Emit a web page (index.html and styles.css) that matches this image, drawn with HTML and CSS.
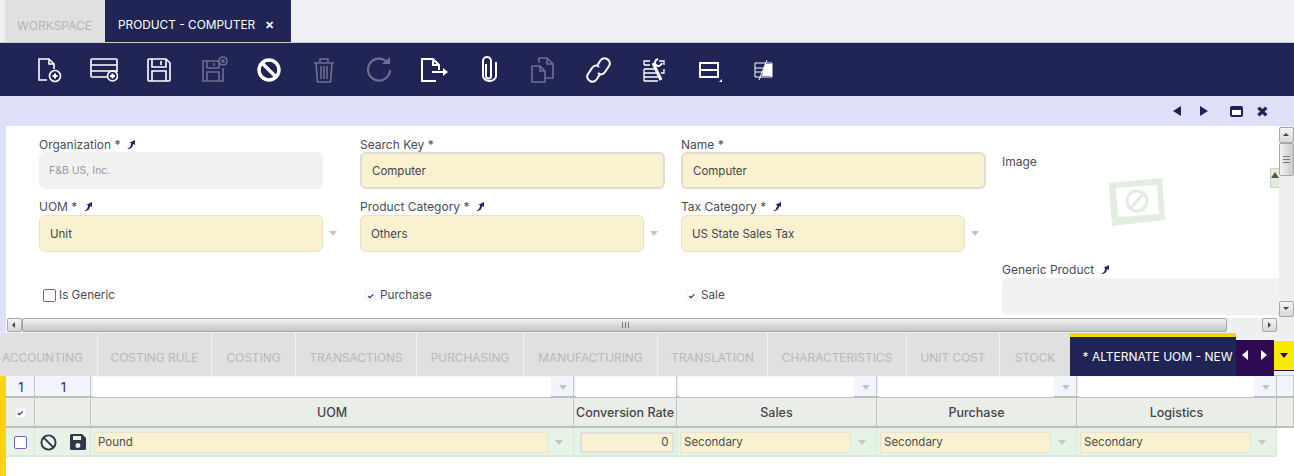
FILE: index.html
```html
<!DOCTYPE html>
<html lang="en">
<head>
  <meta charset="UTF-8">
  <title>Product - Computer</title>
  <link rel="stylesheet" href="styles.css">
</head>
<body>
<div class="wintabs">
  <div class="wintab">WORKSPACE</div>
  <div class="wintab current">PRODUCT - COMPUTER <span class="close">&#10005;</span></div>
</div>

<div class="toolbar">
  <span class="tool"><svg viewBox="0 0 28 28"><path d="M12 24H4V3h10l5 5v5M14 3v5h5"/><circle cx="20" cy="20" r="5.5"/><path d="M17.5 20h5M20 17.5v5" stroke-width="2"/></svg></span>
  <span class="tool"><svg viewBox="0 0 28 28"><path d="M17 21H2a1 1 0 0 1-1-1V4a1 1 0 0 1 1-1h24a1 1 0 0 1 1 1v12M1 9h26M1 15h26"/><circle cx="22.500" cy="20" r="5"/><path d="M20 20h5M22.500 17.500v5" stroke-width="2"/></svg></span>
  <span class="tool"><svg viewBox="0 0 28 28"><path d="M4 3h17l4 4v17a1 1 0 0 1-1 1H4a1 1 0 0 1-1-1V4a1 1 0 0 1 1-1zM7 3v8h14V3M7 25V15h14v10M16 5v4"/></svg></span>
  <span class="tool off"><svg viewBox="0 0 28 28"><path d="M19 5H3v20h20V12M7 5v7h12V5M7 25v-9h12v9M14 7v3"/><circle cx="23" cy="5" r="4"/><path d="M21.500 3.500l3 3M24.500 3.500l-3 3"/></svg></span>
  <span class="tool"><svg viewBox="0 0 28 28"><circle cx="14" cy="14" r="10" stroke-width="3.400"/><path d="M7 7l14 14" stroke-width="3.400"/></svg></span>
  <span class="tool off"><svg viewBox="0 0 28 28"><path d="M4 7h20M10 6V3h8v3M6 7l1.500 19h13L22 7M11 10v13M14 10v13M17 10v13"/></svg></span>
  <span class="tool off"><svg viewBox="0 0 28 28"><path d="M22 6a11 11 0 1 0 3 8" stroke-width="2.200"/><path d="M17 8h8V1z" fill="currentColor" stroke="none"/></svg></span>
  <span class="tool"><svg viewBox="0 0 28 28"><path d="M16 25H2V3h11l6 6v5M13 3v6h6M12 16h13" stroke-width="2"/><path d="M23 12l5 4-5 4z" fill="currentColor" stroke="none"/></svg></span>
  <span class="tool"><svg viewBox="0 0 28 28"><path d="M11 8v12a2.500 2.500 0 0 0 5 0V5a4 4 0 0 0-8 0v15a6.500 5 0 0 0 13 0V6" stroke-width="2"/></svg></span>
  <span class="tool off"><svg viewBox="0 0 28 28"><path d="M9 7V2h8l6 6v14h-8M17 2v6h6M2 10h8l5 5v11H2zM10 10v5h5"/></svg></span>
  <span class="tool"><svg viewBox="0 0 28 28"><path d="M12 10l3-5c2-3 5-3 7-2s4 4 2 7l-4 6c-2 3-5 3-7 1M15 18l-3 5c-2 3-5 3-7 2s-4-4-2-7l4-6c2-3 5-3 7-1" stroke-width="2"/></svg></span>
  <span class="tool"><svg viewBox="0 0 28 28"><path d="M4 9V5h6M4 9h6M4 13h11M4 17h13M4 21h16M4 25h14M4 13v12M19 5h5v4M24 13v4h-3" stroke-width="1.300"/><path d="M13 7l8 17" stroke-width="3"/><path d="M18 3c-3 1-4 4-2 6s5 1 6-2" stroke-width="2"/></svg></span>
  <span class="tool"><svg viewBox="0 0 28 28"><path d="M5 7h18v14H5zM5 14h18" stroke-width="2"/><path d="M24 26h3v-3z" fill="currentColor" stroke="none"/></svg></span>
  <span class="tool"><svg viewBox="0 0 28 28"><path d="M5 7h17v14H5zM5 12h12M5 16h10" stroke-width="1"/><path d="M15 8h7v12H12z" fill="currentColor" stroke="none"/><path d="M17 4L9 24" stroke-width="1"/></svg></span>
</div>

<div class="panehead">
  <span class="tri left"></span>
  <span class="tri right"></span>
  <span class="winbtn"></span>
  <span class="closebtn">&#10006;</span>
</div>

<div class="formwrap">
  <div class="form">
    <div class="col">
      <div class="field">
        <label>Organization * <svg class="zoom" viewBox="0 0 10 10"><path d="M1 9c3-1 4-3 4-6L3 3l6-3 0 5-2-1c0 3-2 5-6 5z"/></svg></label>
        <div class="inp readonly">F&amp;B US, Inc.</div>
      </div>
      <div class="field">
        <label>UOM * <svg class="zoom" viewBox="0 0 10 10"><path d="M1 9c3-1 4-3 4-6L3 3l6-3 0 5-2-1c0 3-2 5-6 5z"/></svg></label>
        <div class="inp select">Unit</div>
      </div>
      <div class="check"><span class="box"></span>Is Generic</div>
    </div>
    <div class="col">
      <div class="field">
        <label>Search Key *</label>
        <div class="inp thick">Computer</div>
      </div>
      <div class="field">
        <label>Product Category * <svg class="zoom" viewBox="0 0 10 10"><path d="M1 9c3-1 4-3 4-6L3 3l6-3 0 5-2-1c0 3-2 5-6 5z"/></svg></label>
        <div class="inp select">Others</div>
      </div>
      <div class="check ticked"><span class="box small">&#10003;</span>Purchase</div>
    </div>
    <div class="col">
      <div class="field">
        <label>Name *</label>
        <div class="inp thick">Computer</div>
      </div>
      <div class="field">
        <label>Tax Category * <svg class="zoom" viewBox="0 0 10 10"><path d="M1 9c3-1 4-3 4-6L3 3l6-3 0 5-2-1c0 3-2 5-6 5z"/></svg></label>
        <div class="inp select">US State Sales Tax</div>
      </div>
      <div class="check ticked"><span class="box small">&#10003;</span>Sale</div>
    </div>
    <div class="col last">
      <label class="imglabel">Image</label>
      <svg class="noimage" viewBox="0 0 58 50"><path d="M1 6L54 1l3 42-53 6z" fill="#e3ece1"/><path d="M8 11L49 8l2 29-41 3z" fill="#fff"/><circle cx="29" cy="24" r="10" fill="none" stroke="#e3ece1" stroke-width="3"/><path d="M23 31l12-14" stroke="#e3ece1" stroke-width="3"/></svg>
      <label class="genlabel">Generic Product <svg class="zoom" viewBox="0 0 10 10"><path d="M1 9c3-1 4-3 4-6L3 3l6-3 0 5-2-1c0 3-2 5-6 5z"/></svg></label>
      <div class="inp readonly wide"></div>
    </div>
    <span class="imgbtn"></span>
  </div>
  <div class="vbar">
    <span class="sbtn up"></span>
    <span class="vthumb"></span>
    <span class="sbtn down"></span>
  </div>
  <div class="hbar">
    <span class="sbtn lft"></span>
    <span class="hthumb"></span>
    <span class="sbtn rgt"></span>
  </div>
</div>

<div class="subtabs">
  <div class="subtab first">ACCOUNTING</div>
  <div class="subtab">COSTING RULE</div>
  <div class="subtab">COSTING</div>
  <div class="subtab">TRANSACTIONS</div>
  <div class="subtab">PURCHASING</div>
  <div class="subtab">MANUFACTURING</div>
  <div class="subtab">TRANSLATION</div>
  <div class="subtab">CHARACTERISTICS</div>
  <div class="subtab">UNIT COST</div>
  <div class="subtab">STOCK</div>
  <div class="subtab active">* ALTERNATE UOM - NEW</div>
  <div class="subnav">
    <span class="tri-w left"></span>
    <span class="tri-w right"></span>
  </div>
  <div class="submenu"><span></span></div>
</div>

<div class="gridwrap">
  <div class="row filter">
    <div class="c num">1</div>
    <div class="c num">1</div>
    <div class="c"><span class="finp"></span><span class="arrow"></span></div>
    <div class="c"><span class="finp"></span></div>
    <div class="c"><span class="finp"></span><span class="arrow"></span></div>
    <div class="c"><span class="finp"></span><span class="arrow"></span></div>
    <div class="c"><span class="finp"></span><span class="arrow"></span></div>
    <div class="c"></div>
  </div>
  <div class="row head">
    <div class="c"><span class="box small">&#10003;</span></div>
    <div class="c"></div>
    <div class="c">UOM</div>
    <div class="c">Conversion Rate</div>
    <div class="c">Sales</div>
    <div class="c">Purchase</div>
    <div class="c">Logistics</div>
    <div class="c"></div>
  </div>
  <div class="row data">
    <div class="c"><span class="box"></span></div>
    <div class="c acts">
      <svg viewBox="0 0 18 18"><circle cx="9" cy="9" r="7.500"/><path d="M3.800 3.800l10.400 10.400"/></svg>
      <svg viewBox="0 0 16 16"><path class="solid" d="M1.500 0H12l4 4v10.500a1.500 1.500 0 0 1-1.500 1.500h-13A1.500 1.500 0 0 1 0 14.500v-13A1.500 1.500 0 0 1 1.500 0zM3 2v4h8V2zM8 9a2.500 2.500 0 1 0 0 5 2.500 2.500 0 0 0 0-5z" fill-rule="evenodd"/></svg>
    </div>
    <div class="c"><span class="dinp">Pound</span><span class="arrow"></span></div>
    <div class="c"><span class="dinp num thick">0</span></div>
    <div class="c"><span class="dinp">Secondary</span><span class="arrow"></span></div>
    <div class="c"><span class="dinp">Secondary</span><span class="arrow"></span></div>
    <div class="c"><span class="dinp">Secondary</span><span class="arrow"></span></div>
  </div>
</div>
</body>
</html>
```

FILE: styles.css
```css
* {
  box-sizing: border-box;
  margin: 0;
  padding: 0;
}

body {
  width: 1294px;
  height: 476px;
  overflow: hidden;
  background: #fff;
  font-family: Inter, "Liberation Sans", sans-serif;
  font-size: 11.700px;
  color: #4a4d55;
}

/* window tabs */
.wintabs {
  display: flex;
  height: 43px;
  padding-left: 5px;
  background: #eff0f6;
  border-bottom: 1px solid #c9cad0;
}

.wintab {
  display: flex;
  align-items: center;
  width: 100px;
  padding: 8px 0 0 12px;
  background: #e0e0e0;
  color: #b5b5b5;
  font-size: 12px;
}

.wintab.current {
  width: 186px;
  padding-left: 13px;
  background: #202556;
  color: #fff;
  font-size: 11.850px;
}

.close {
  margin-left: 10px;
  font-size: 11px;
  font-weight: bold;
}

/* toolbar */
.toolbar {
  display: flex;
  align-items: center;
  height: 53px;
  padding-left: 21px;
  background: #202556;
}

.tool {
  display: flex;
  justify-content: center;
  width: 55px;
  color: #fff;
}

.tool.off {
  color: #6c6f8f;
}

.tool svg {
  width: 28px;
  height: 28px;
  fill: none;
  stroke: currentColor;
  stroke-width: 1.600;
}

/* pane header */
.panehead {
  display: flex;
  align-items: center;
  height: 30px;
  padding-left: 1173px;
  background: #dde0f7;
}

.tri {
  width: 0;
  height: 0;
  border-top: 5px solid transparent;
  border-bottom: 5px solid transparent;
}

.tri.left {
  border-right: 8px solid #1c2159;
}

.tri.right {
  margin-left: 19px;
  border-left: 8px solid #1c2159;
}

.winbtn {
  width: 13px;
  height: 11px;
  margin-left: 22px;
  background: #fff;
  border: 2px solid #1c2159;
  border-top-width: 4px;
  border-radius: 2px;
}

.closebtn {
  margin-left: 13px;
  color: #1c2159;
  font-size: 15px;
  line-height: 15px;
}

/* form */
.formwrap {
  position: relative;
  height: 206px;
  border-left: 6px solid #dde0f7;
}

.form {
  display: grid;
  grid-template-columns: 321px 321px 321px 277px;
  height: 191px;
  padding: 9px 0 0 33px;
  overflow: hidden;
}

.col {
  display: flex;
  flex-direction: column;
}

.field {
  height: 54px;
  margin-bottom: 9px;
}

label {
  display: block;
  height: 17px;
  line-height: 19px;
  font-size: 12px;
  white-space: nowrap;
}

.field + .field label,
.genlabel {
  line-height: 17px;
}

.zoom {
  width: 10px;
  height: 10px;
  margin-left: 2px;
  vertical-align: -1px;
  fill: #3b1a66;
}

.inp {
  position: relative;
  width: 284px;
  height: 37px;
  padding-left: 10px;
  line-height: 36px;
  background: #f9f1cf;
  border: 1px solid #e6e3d0;
  border-radius: 6px;
  font-size: 11.500px;
  color: #43464e;
}

.inp.thick {
  width: 305px;
  border: 2px solid #dfddd0;
  line-height: 34px;
}

.inp.readonly {
  padding-left: 9px;
  background: #f1f1f1;
  border-color: #f1f1f1;
  color: #9a9a9a;
  font-size: 10.500px;
}

.inp.wide {
  width: 277px;
  border-radius: 6px 0 0 6px;
}

.inp.select::after {
  content: "";
  position: absolute;
  top: 15px;
  left: 289px;
  border-top: 5px solid #c4c4c4;
  border-left: 4px solid transparent;
  border-right: 4px solid transparent;
}

.check {
  display: flex;
  align-items: center;
  height: 18px;
  margin: 25px 0 0 4px;
}

.box {
  display: inline-block;
  width: 13px;
  height: 13px;
  margin-right: 3px;
  background: #fff;
  border: 1px solid #7c5eb0;
  border-radius: 2px;
}

.box.small {
  width: 11px;
  height: 11px;
  line-height: 10px;
  text-align: center;
  font-size: 8px;
  font-weight: bold;
  color: #3b1a66;
  border-color: #f0f0f0;
}

.check.ticked {
  margin-left: 5px;
}

.check.ticked .box {
  margin-right: 4px;
}

.imglabel {
  margin-top: 17px;
}

.noimage {
  display: block;
  width: 58px;
  height: 50px;
  margin: 8px 0 0 106px;
}

.genlabel {
  margin-top: 34px;
}

.imgbtn {
  position: absolute;
  top: 42px;
  left: 1264px;
  width: 10px;
  height: 20px;
  background: #e3ecd8;
  border: 1px solid #c6d6b6;
}

.imgbtn::after {
  content: "";
  position: absolute;
  top: 3px;
  right: 0;
  border: 4px solid transparent;
  border-top: 0;
  border-bottom: 6px solid #55554f;
}

/* scrollbars */
.vbar {
  position: absolute;
  top: 0;
  right: 0;
  width: 15px;
  height: 192px;
  background: #efefef;
}

.hbar {
  position: absolute;
  top: 192px;
  left: 1px;
  right: 0;
  display: flex;
  height: 14px;
  background: #efefef;
}

.sbtn {
  position: absolute;
  width: 15px;
  height: 16px;
  background: linear-gradient(#f4f4f4, #d8d8d8);
  border: 1px solid #a8a8a8;
  border-radius: 2px;
}

.sbtn::after {
  content: "";
  position: absolute;
  top: 5px;
  left: 3px;
  border: 3px solid transparent;
}

.sbtn.up {
  top: 1px;
}

.sbtn.up::after {
  top: 2px;
  border-bottom-color: #444;
}

.sbtn.down {
  bottom: 1px;
}

.sbtn.down::after {
  border-top-color: #444;
}

.sbtn.lft {
  left: 0;
  height: 14px;
}

.sbtn.lft::after {
  top: 3px;
  left: 1px;
  border-right-color: #444;
}

.sbtn.rgt {
  left: 1255px;
  height: 14px;
}

.sbtn.rgt::after {
  top: 3px;
  left: 5px;
  border-left-color: #444;
}

.vthumb {
  position: absolute;
  top: 17px;
  left: 0;
  width: 15px;
  height: 33px;
  background: linear-gradient(90deg, #f2f2f2, #c8c8c8);
  border: 1px solid #a8a8a8;
  border-radius: 2px;
}

.vthumb::after {
  content: "";
  position: absolute;
  top: 12px;
  left: 3px;
  width: 7px;
  height: 7px;
  background: repeating-linear-gradient(#777 0 1px, transparent 1px 3px);
}

.hthumb {
  position: absolute;
  top: 0;
  left: 15px;
  width: 1205px;
  height: 14px;
  background: linear-gradient(#f2f2f2, #c4c4c4);
  border: 1px solid #a8a8a8;
  border-radius: 2px;
}

.hthumb::after {
  content: "";
  position: absolute;
  top: 3px;
  left: 599px;
  width: 7px;
  height: 6px;
  background: repeating-linear-gradient(90deg, #777 0 1px, transparent 1px 3px);
}

/* sub tabs */
.subtabs {
  display: grid;
  grid-template-columns: 98px 114px 84px 121px 107px 134px 110px 139px 93px 70px 166px 38px 20px;
  height: 44px;
  background: #eff0f6;
  border-bottom: 1px solid #c9c9c9;
}

.subtab {
  display: flex;
  align-items: center;
  justify-content: center;
  margin-top: 1px;
  padding-top: 6px;
  background: #e0e0e0;
  border-right: 1px solid #f1f1f1;
  color: #b9b9b9;
  font-size: 11.900px;
  white-space: nowrap;
}

.subtab:nth-child(10) {
  border-right: 0;
}

.subtab.first {
  justify-content: flex-start;
  padding-left: 2px;
}

.subtab.active {
  height: 43px;
  padding: 0 0 0 9px;
  background: #202556;
  border: 0;
  border-top: 4px solid #f7d30f;
  color: #fff;
  font-size: 12px;
}

.subnav {
  display: flex;
  align-items: flex-start;
  gap: 13px;
  height: 36px;
  margin-top: 8px;
  padding: 10px 0 0 6px;
  background: #2e0a54;
}

.tri-w {
  width: 0;
  height: 0;
  border-top: 5px solid transparent;
  border-bottom: 5px solid transparent;
}

.tri-w.left {
  border-right: 6px solid #fff;
}

.tri-w.right {
  border-left: 6px solid #fff;
}

.submenu {
  height: 30px;
  margin-top: 9px;
  padding: 12px 0 0 6px;
  background: #f5ea00;
  border-bottom: 1px solid #2e0a54;
}

.submenu span {
  display: block;
  width: 0;
  border-top: 5px solid #2e0a54;
  border-left: 4px solid transparent;
  border-right: 4px solid transparent;
}

/* grid */
.gridwrap {
  height: 100px;
  border-left: 6px solid #fdd313;
}

.row {
  display: grid;
  grid-template-columns: 29px 56px 483px 103px 200px 200px 200px 17px;
}

.c {
  display: flex;
  align-items: center;
  justify-content: center;
  border-right: 1px solid #c4c4c0;
}

.filter {
  height: 22px;
  background: #f1f4fa;
  border-bottom: 2px solid #bdbdb9;
}

.filter .num {
  color: #3a2a5c;
  font-size: 13px;
  line-height: 20px;
}

.filter .c {
  padding: 1px 0 1px 2px;
}

.finp {
  flex: 1;
  height: 100%;
  background: #fff;
}

.arrow {
  flex: none;
  width: 0;
  margin: 0 6px 0 8px;
  border-top: 5px solid #c4c4c4;
  border-left: 4px solid transparent;
  border-right: 4px solid transparent;
}

.head {
  height: 30px;
  background: #ebede8;
  border-bottom: 2px solid #bdbdb9;
  color: #44464c;
  font-size: 12.500px;
  font-weight: 500;
  white-space: nowrap;
}

.head .box.small {
  margin: 0;
}

.data {
  width: 1271px;
  height: 29px;
  padding-top: 1px;
  background: #e6f4e7;
  border-bottom: 2px solid #d8e8da;
  grid-template-columns: 29px 56px 483px 103px 200px 200px 200px;
}

.data .c {
  border-right-color: #d8e8da;
}

.data .box {
  margin: 0;
}

.data .arrow {
  margin: 0 10px 0 7px;
}

.acts {
  gap: 13px;
}

.acts svg {
  width: 17px;
  height: 17px;
  flex: none;
  fill: none;
  stroke: #33364f;
  stroke-width: 2;
}

.acts svg:last-child {
  width: 16px;
  height: 16px;
  stroke: none;
}

.acts .solid {
  fill: #33364f;
}

.data .c:nth-child(n+3) {
  padding-left: 3px;
}

.dinp {
  flex: 1;
  height: 21px;
  padding-left: 3px;
  line-height: 19px;
  background: #f9f1cf;
  border: 1px solid #e3e4d6;
  color: #4a4d55;
  font-size: 11.500px;
  overflow: hidden;
}

.dinp.thick {
  flex: none;
  width: 94px;
  padding-right: 3px;
  text-align: right;
  line-height: 17px;
  border: 2px solid #dedfd8;
}
```
